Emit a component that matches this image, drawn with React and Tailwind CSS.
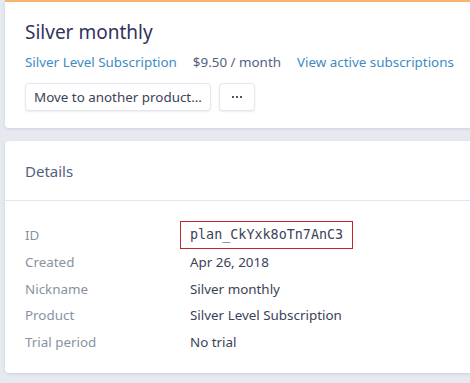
import React from "react";

export default function App() {
  const rows = [
    ["Created", "Apr 26, 2018"],
    ["Nickname", "Silver monthly"],
    ["Product", "Silver Level Subscription"],
    ["Trial period", "No trial"],
  ];
  return (
    <div
      className="w-[470px] h-[383px] overflow-hidden bg-[#e6e9ef] pl-[5px] flex flex-col gap-[13px]"
      style={{ fontFamily: '"Noto Sans", sans-serif' }}
    >
      <div className="w-[480px] bg-white border-t-2 border-[#f9b46e] rounded-bl-[4px] shadow-[0_1px_3px_rgba(50,50,93,0.12)] pl-[20px] pt-[17px] pb-[17px] flex flex-col">
        <div className="text-[19px] leading-[26px] text-[#32325d]">Silver monthly</div>
        <div className="flex items-center gap-[16px] mt-[7px] text-[13.4px] leading-[20px]">
          <span className="text-[#3d8bc4]">Silver Level Subscription</span>
          <span className="text-[#525f7f]">$9.50 / month</span>
          <span className="text-[#3d8bc4]">View active subscriptions</span>
        </div>
        <div className="flex gap-[8px] mt-[11px]">
          <button className="h-[28px] px-[8px] rounded-[4px] bg-white border border-[#e3e8ee] shadow-[0_1px_2px_rgba(0,0,0,0.08)] text-[13.4px] text-[#3c4257]">
            Move to another product…
          </button>
          <button className="h-[28px] w-[36px] rounded-[4px] bg-white border border-[#e3e8ee] shadow-[0_1px_2px_rgba(0,0,0,0.08)] flex items-center justify-center gap-[1.5px]">
            <span className="w-[2.5px] h-[2.5px] bg-[#4f566b]" />
            <span className="w-[2.5px] h-[2.5px] bg-[#4f566b]" />
            <span className="w-[2.5px] h-[2.5px] bg-[#4f566b]" />
          </button>
        </div>
      </div>
      <div className="w-[480px] h-[232px] bg-white rounded-l-[4px] shadow-[0_1px_3px_rgba(50,50,93,0.12)] flex flex-col">
        <div className="h-[60px] pl-[20px] pt-[2px] flex items-center border-b border-[#e3e8ee] text-[15px] text-[#525f7f]">
          Details
        </div>
        <div className="pl-[20px] pt-[20px] flex flex-col text-[13.4px]">
          <div className="flex items-center h-[28px]">
            <span className="w-[155px] text-[#8792a2]">ID</span>
            <span className="h-[28px] px-[9px] flex items-center border border-[#c0272d] text-[13.4px] text-[#3c4257]" style={{ fontFamily: '"DejaVu Sans Mono", monospace' }}>
              plan_CkYxk8oTn7AnC3
            </span>
          </div>
          {rows.map(([k, v]) => (
            <div key={k} className="flex items-center h-[26.5px]">
              <span className="w-[165px] text-[#8792a2]">{k}</span>
              <span className="text-[#3c4257]">{v}</span>
            </div>
          ))}
        </div>
      </div>
    </div>
  );
}
